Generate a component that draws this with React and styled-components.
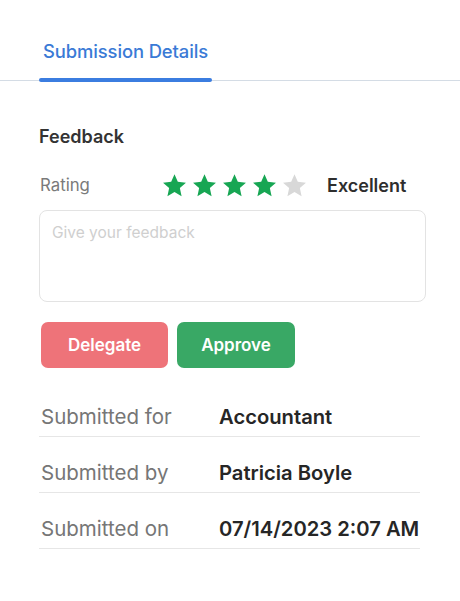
import React from "react";
import styled, { createGlobalStyle } from "styled-components";

const Global = createGlobalStyle`
  html, body { margin: 0; padding: 0; background: #fff; }
  body { font-family: Inter, "Noto Sans", sans-serif; color: #2b2b2b; }
  * { box-sizing: border-box; }
`;

const Page = styled.div`
  width: 460px;
  min-height: 601px;
  background: #fff;
`;

const TabBar = styled.div`
  display: flex;
  padding-left: 39px;
  border-bottom: 1px solid #d4dce5;
`;

const Tab = styled.div`
  position: relative;
  padding: 38px 4px 16px;
  font-size: 18.4px;
  line-height: 26px;
  font-weight: 500;
  color: #3a7ad6;
  letter-spacing: -0.1px;
  &::after {
    content: "";
    position: absolute;
    left: 0;
    right: 0;
    bottom: -2px;
    height: 4px;
    border-radius: 2px;
    background: #3b7de0;
  }
`;

const Content = styled.div`
  padding: 44px 34px 0 39px;
  display: flex;
  flex-direction: column;
`;

const Title = styled.div`
  font-size: 18px;
  line-height: 24px;
  font-weight: 600;
  color: #333;
`;

const RatingRow = styled.div`
  margin-top: 21px;
  height: 30px;
  display: flex;
  align-items: center;
`;

const RatingLabel = styled.div`
  width: 122px;
  font-size: 16.8px;
  color: #7a7a7a;
  padding-left: 1px;
`;

const Stars = styled.div`
  display: flex;
  gap: 3px;
  margin-right: 19px;
`;

const StarSvg = styled.svg`
  width: 27px;
  height: 27px;
  display: block;
  fill: ${(p) => (p.$on ? "#17a653" : "#d8d8d8")};
`;

const RatingText = styled.div`
  font-size: 18px;
  font-weight: 600;
  color: #2e2e2e;
`;

const Feedback = styled.div`
  margin-top: 10px;
  height: 92px;
  border: 1px solid #e3e3e3;
  border-radius: 8px;
  padding: 12px 12px;
  font-size: 15.5px;
  line-height: 20px;
  color: #cfcfcf;
`;

const Buttons = styled.div`
  margin-top: 20px;
  display: flex;
  gap: 9px;
  padding-left: 2px;
`;

const Button = styled.button`
  height: 46px;
  border: none;
  border-radius: 7px;
  padding: 0 ${(p) => p.$px}px;
  background: ${(p) => p.$bg};
  color: #fff;
  font-family: Inter, "Noto Sans", sans-serif;
  font-size: 17px;
  font-weight: 600;
  cursor: pointer;
`;

const Details = styled.div`
  margin-top: 13px;
  margin-right: 6px;
  display: flex;
  flex-direction: column;
`;

const Row = styled.div`
  display: flex;
  align-items: center;
  padding: 23px 0 6px;
  border-bottom: 1px solid #e6e6e6;
  line-height: 26px;
`;

const Label = styled.div`
  width: 180px;
  padding-left: 2px;
  font-size: 20.5px;
  color: #767676;
`;

const Value = styled.div`
  font-size: 20.2px;
  font-weight: 600;
  color: #262626;
`;

const Star = ({ on }) => (
  <StarSvg $on={on} viewBox="0 0 24 24">
    <polygon points="12,2 14.94,8.7 22.2,9.45 16.76,14.33 18.3,21.5 12,17.8 5.7,21.5 7.24,14.33 1.8,9.45 9.06,8.7" />
  </StarSvg>
);

const rows = [
  ["Submitted for", "Accountant"],
  ["Submitted by", "Patricia Boyle"],
  ["Submitted on", "07/14/2023 2:07 AM"],
];

export default function App() {
  return (
    <Page>
      <Global />
      <TabBar>
        <Tab>Submission Details</Tab>
      </TabBar>
      <Content>
        <Title>Feedback</Title>
        <RatingRow>
          <RatingLabel>Rating</RatingLabel>
          <Stars>
            {[1, 2, 3, 4, 5].map((i) => (
              <Star key={i} on={i <= 4} />
            ))}
          </Stars>
          <RatingText>Excellent</RatingText>
        </RatingRow>
        <Feedback>Give your feedback</Feedback>
        <Buttons>
          <Button $bg="#ee7379" $px={27}>Delegate</Button>
          <Button $bg="#39a865" $px={24}>Approve</Button>
        </Buttons>
        <Details>
          {rows.map(([l, v]) => (
            <Row key={l}>
              <Label>{l}</Label>
              <Value>{v}</Value>
            </Row>
          ))}
        </Details>
      </Content>
    </Page>
  );
}
